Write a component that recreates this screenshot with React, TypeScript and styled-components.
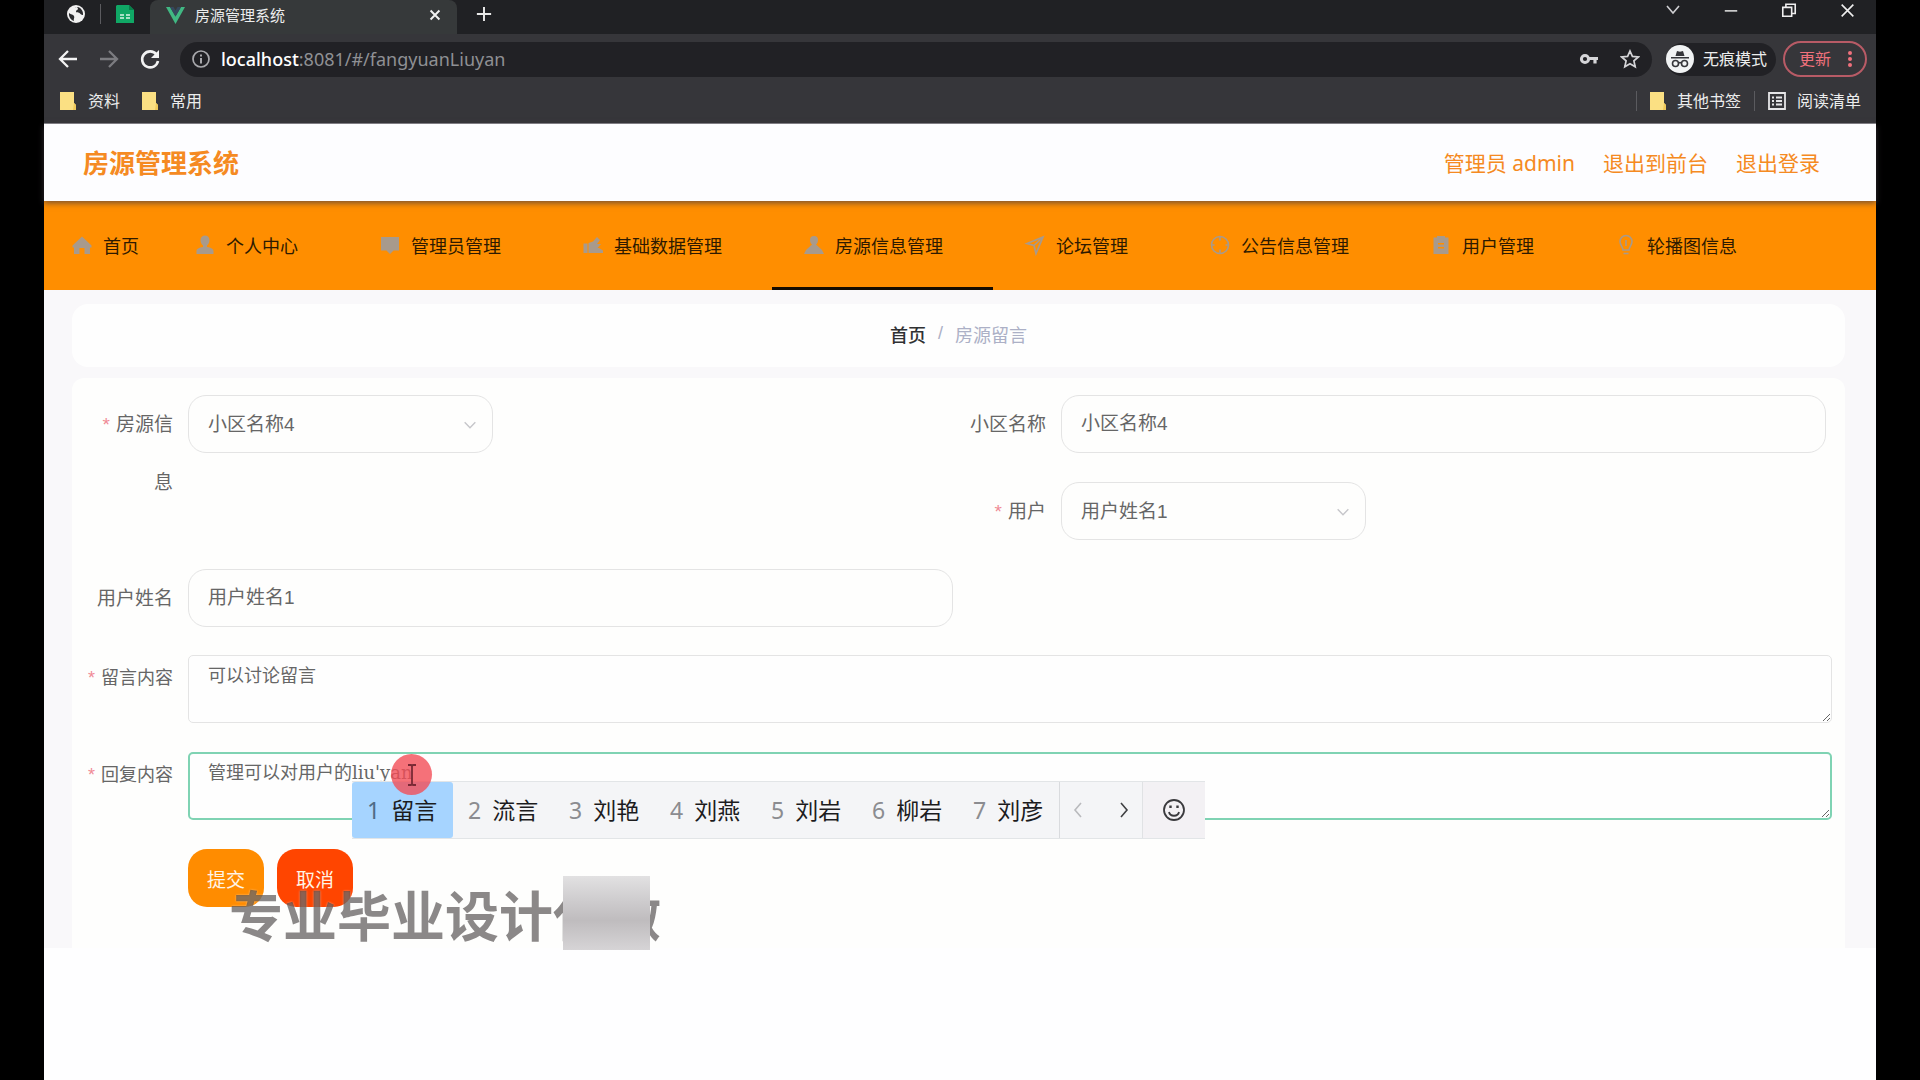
import React from "react";
import styled, { createGlobalStyle, css } from "styled-components";

const uiFont = `"Noto Sans", "Noto Sans CJK SC", sans-serif`;
const cjkFont = `"Liberation Sans", "Noto Sans CJK SC", sans-serif`;

const GlobalStyle = createGlobalStyle`
  *, *::before, *::after { box-sizing: border-box; }
  body { margin: 0; background: #000; font-family: ${cjkFont}; }
  button, input, select, textarea { font: inherit; color: inherit; margin: 0; }
  button { border: 0; background: none; padding: 0; }
  a { color: inherit; text-decoration: none; }
  svg { display: block; flex: none; }
`;

const Window = styled.div`
  margin: 0 44px;
  min-height: 100vh;
  display: flex;
  flex-direction: column;
  background: #fefeff;
`;

/* ---------- browser chrome ---------- */
const Chrome = styled.header`
  background: #36363a;
  color: #eceded;
  font-family: ${uiFont};
  font-size: 16px;
  line-height: 24px;
  border-bottom: 1px solid #8b8b90;
`;
const TabStrip = styled.div`
  display: flex;
  height: 34px;
  background: #202124;
`;
const PinnedTabs = styled.div`
  display: flex;
  align-items: center;
  width: 106px;
  gap: 15px;
  padding: 0 0 6px 23px;
`;
const Divider = styled.span<{ $color?: string }>`
  width: 1px;
  height: 20px;
  background: ${(p) => p.$color ?? "#5b5b5f"};
`;
const ActiveTab = styled.div`
  display: flex;
  align-items: center;
  gap: 10px;
  width: 307px;
  padding: 0 14px 4px 16px;
  border-radius: 8px 8px 0 0;
  background: #36393a;
`;
const TabTitle = styled.span`
  flex: 1;
  font-size: 15px;
`;
const IconButton = styled.button`
  display: grid;
  place-items: center;
`;
const NewTab = styled(IconButton)`
  width: 54px;
  height: 28px;
`;
const WindowControls = styled.div`
  display: flex;
  margin-left: auto;
  height: 20px;
`;
const ControlButton = styled(IconButton)`
  width: 58px;
`;
const Toolbar = styled.div`
  display: flex;
  align-items: center;
  height: 50px;
  padding: 0 9px 0 13px;
`;
const NavButtons = styled.div`
  display: flex;
  gap: 19px;
  width: 123px;
`;
const AddressBar = styled.div`
  flex: 1;
  display: flex;
  align-items: center;
  height: 35px;
  padding: 0 12px;
  border-radius: 18px;
  background: #212125;
  font-size: 18px;
  color: #8f9094;
`;
const Url = styled.span`
  flex: 1;
  padding-left: 11px;
`;
const Host = styled.span`
  color: #fff;
  font-weight: 500;
`;
const AddressActions = styled.div`
  display: flex;
  gap: 21px;
`;
const Incognito = styled.div`
  display: flex;
  align-items: center;
  gap: 9px;
  height: 33px;
  margin: 0 7px 0 14px;
  padding: 0 9px 0 0;
  border-radius: 17px;
  background: #212125;
`;
const UpdateButton = styled.button`
  display: flex;
  align-items: center;
  gap: 16px;
  height: 36px;
  padding: 0 12px 0 14px;
  border: 2px solid #b85b66;
  border-radius: 18px;
  color: #f0717c;
`;
const Bookmarks = styled.nav`
  display: flex;
  align-items: center;
  height: 39px;
  padding: 0 15px 6px 16px;
`;
const Bookmark = styled.a`
  display: flex;
  align-items: center;
  gap: 12px;
  margin-right: 22px;
`;
const BookmarksRight = styled.div`
  display: flex;
  align-items: center;
  gap: 13px;
  margin-left: auto;
  ${Bookmark} { margin-right: 0; gap: 11px; }
`;

/* ---------- site ---------- */
const SiteHeader = styled.div`
  position: relative;
  display: flex;
  align-items: center;
  justify-content: space-between;
  height: 77px;
  padding: 0 56px 0 39px;
  background: #fdfdff;
  color: #f58a22;
  box-shadow: 0 2px 6px rgba(70, 60, 70, 0.75);
`;
const SiteTitle = styled.h1`
  margin: 0;
  padding-top: 2px;
  font-size: 26px;
  line-height: 38px;
  font-weight: 700;
`;
const UserLinks = styled.div`
  display: flex;
  gap: 28px;
  font-family: ${uiFont};
  font-size: 21px;
  line-height: 32px;
`;
const MainMenu = styled.nav`
  display: flex;
  height: 89px;
  background: #ff8e00;
  color: #2e1a00;
  font-size: 18px;
`;
const MenuItem = styled.a<{ $active?: boolean; $plain?: boolean }>`
  display: flex;
  align-items: center;
  gap: 9px;
  padding: ${(p) => (p.$plain ? "2px 24px 0 26px" : "2px 50px 0 30px")};
  border-bottom: 3px solid ${(p) => (p.$active ? "#160c00" : "transparent")};
  white-space: nowrap;
`;
const Main = styled.main`
  padding: 14px 31px 0 28px;
  background: #f9f8fa;
`;
const Breadcrumb = styled.nav`
  display: flex;
  align-items: center;
  justify-content: center;
  gap: 12px;
  height: 63px;
  margin-bottom: 11px;
  padding-bottom: 4px;
  border-radius: 16px;
  background: #fefefe;
  font-size: 18px;
  color: #acb0c6;
`;
const CrumbLink = styled.a`
  color: #303133;
  font-weight: 500;
`;
const Form = styled.form`
  padding: 17px 13px 41px 8px;
  border-radius: 12px 12px 0 0;
  background: #fefefd;
  color: #666;
`;
const FieldGrid = styled.div`
  display: grid;
  grid-template-columns: 1fr 1fr;
  grid-auto-rows: 58px;
  row-gap: 29px;
  margin-bottom: 28px;
  padding-right: 6px;
  font-size: 19px;
  line-height: 58px;
`;
const Field = styled.div<{ $column?: number; $tall?: boolean }>`
  display: flex;
  align-items: flex-start;
  ${(p) => p.$column && css`grid-column: ${p.$column};`}
  ${(p) => p.$tall && css`grid-row: span 2;`}
`;
const Label = styled.label<{ $required?: boolean }>`
  flex: none;
  width: 108px;
  padding: 1px 15px 0 12px;
  text-align: right;
  ${(p) => p.$required && css`
    &::before {
      content: "*";
      margin-right: 6px;
      color: #f08a96;
    }
  `}
`;
const TextInput = styled.input`
  flex: 1;
  min-width: 0;
  height: 58px;
  padding: 0 19px;
  border: 1px solid #e4e4e4;
  border-radius: 18px;
  background: #fefefd;
  outline: 0;
`;
const SelectBox = styled.div`
  position: relative;
  width: 305px;
  svg { position: absolute; right: 15px; top: 22px; pointer-events: none; }
`;
const Select = styled.select`
  display: block;
  appearance: none;
  width: 100%;
  height: 58px;
  padding: 0 19px;
  border: 1px solid #e4e4e4;
  border-radius: 18px;
  background: #fefefd;
  outline: 0;
`;
const AreaField = styled.div`
  position: relative;
  display: flex;
  margin-bottom: 29px;
  font-size: 18px;
  line-height: 46px;
  ${Label} { padding: 0 15px 0 0; }
`;
const TextArea = styled.textarea<{ $focused?: boolean }>`
  flex: 1;
  min-width: 0;
  height: 68px;
  padding: ${(p) => (p.$focused ? "5px 18px" : "6px 19px")};
  border: ${(p) => (p.$focused ? "2px solid #7fd3b3" : "1px solid #e4e4e4")};
  border-radius: 5px;
  background: #fefefe;
  font-family: "DejaVu Serif", "Noto Sans CJK SC", serif;
  line-height: 27px;
  outline: 0;
  resize: vertical;
`;
const Pointer = styled.div`
  position: absolute;
  left: 311px;
  top: 2px;
  z-index: 3;
  display: grid;
  place-items: center;
  width: 41px;
  height: 41px;
  border-radius: 50%;
  background: rgba(242, 78, 88, 0.8);
`;
const Candidates = styled.div`
  position: absolute;
  left: 272px;
  top: 29px;
  z-index: 2;
  display: flex;
  height: 58px;
  border: solid #e2e5e7;
  border-width: 1px 0;
  background: #f4f5f7;
  font-family: ${uiFont};
  font-size: 23px;
  line-height: 32px;
  color: #1c1c1e;
`;
const Candidate = styled.button<{ $selected?: boolean }>`
  display: flex;
  align-items: center;
  gap: 11px;
  width: 101px;
  padding-left: 15px;
  white-space: nowrap;
  ${(p) => p.$selected && css`
    background: #a6d4ff;
    border-radius: 3px;
  `}
`;
const CandidateKey = styled.span<{ $selected?: boolean }>`
  color: ${(p) => (p.$selected ? "#4f6b86" : "#8b8c90")};
`;
const Pager = styled.div`
  display: flex;
  justify-content: center;
  gap: 28px;
  width: 84px;
  border-left: 1px solid #d9dbde;
  border-right: 1px solid #e0e2e4;
`;
const EmojiButton = styled(IconButton)`
  width: 62px;
  background: #f3f1f4;
`;
const Actions = styled.div`
  position: relative;
  display: flex;
  gap: 13px;
  padding-left: 108px;
`;
const ActionButton = styled.button<{ $color: string }>`
  width: 76px;
  height: 58px;
  border-radius: 19px;
  background: ${(p) => p.$color};
  color: #fff4e6;
  font-size: 19px;
`;
const Watermark = styled.div`
  position: absolute;
  left: 149px;
  top: 42px;
  font-size: 54px;
  line-height: 54px;
  font-weight: 700;
  white-space: nowrap;
  color: rgba(55, 50, 50, 0.58);
  text-shadow: 0 0 2px rgba(255, 255, 255, 0.5);
`;
const Mosaic = styled.div`
  position: absolute;
  left: 483px;
  top: 27px;
  width: 87px;
  height: 74px;
  background: linear-gradient(180deg, #e2e1e2 0%, #cdcbcd 35%, #bfbcbe 60%, #d6d4d6 100%);
`;

/* ---------- icons ---------- */
const Folder = () => (
  <svg width="16" height="18" viewBox="0 0 16 18">
    <path d="M0 0h14v11l2 2v5H0z" fill="#fbe083" />
    <path d="M14 11l2 2v5h-3z" fill="#f0c95a" />
  </svg>
);
const Chevron = ({ d, color, size = 18, w = 1.6 }: { d: string; color: string; size?: number; w?: number }) => (
  <svg width={size} height={size} viewBox="0 0 18 18" fill="none" stroke={color} strokeWidth={w}>
    <path d={d} />
  </svg>
);
const DownChevron = () => <Chevron d="M3 6l6 6 6-6" color="#c6c6ca" size={16} />;

const menuIcons: Record<string, React.ReactNode> = {
  home: <path d="M12 3.5L2.500 12.500v2H4V21h5.500v-6h5v6H20v-6.500h1.500v-2z" />,
  user: <path d="M12 2.500a4.500 4.500 0 0 1 4.500 4.500c0 2.500-1 4.500-2.500 5.500v1.500c4 .5 6.500 2 6.500 4v3h-17v-3c0-2 2.500-3.500 6.500-4v-1.500C8.500 11.500 7.500 9.500 7.500 7A4.500 4.500 0 0 1 12 2.500z" />,
  comment: <path d="M3 4h18v13.500h-5.500L12 21l-3.500-3.500H3z" />,
  thumb: <path d="M2.500 10.500h4V20h-4zM7.500 10l4.500-1.500L16 4l3 3-3 4h4l-3.500 4h1.500l4 2.500V20h-14.500z" />,
  custom: <path d="M12 3a4 4 0 0 1 4 4c0 2-.8 3.800-2 4.500L20 17l2 4H2l2-4 6-5.500C8.800 10.800 8 9 8 7a4 4 0 0 1 4-4z" />,
  position: <path d="M20 4L4 10.500l7 2 2 8zM11.500 12L20 4" fill="none" stroke="currentColor" strokeWidth="1.700" />,
  circle: (
    <g fill="none" stroke="currentColor" strokeWidth="1.600">
      <circle cx="12" cy="12" r="8.500" />
      <path d="M12 3.500v4M12 16.500v4M3.500 12h3M17.500 12h3" />
    </g>
  ),
  clipboard: <path fillRule="evenodd" d="M4.500 4.500H8V3h8v1.500h3.500V21h-15zM9 10v1.500h6V10zm0 4v1.500h6V14z" />,
  mic: (
    <g fill="none" stroke="currentColor" strokeWidth="1.600">
      <path d="M9 17c0-3-3-5-3-8.500a6 6 0 0 1 12 0C18 12 15 14 15 17zM9.500 20.500h5M12 7v6" />
    </g>
  ),
};
const MenuIcon = ({ name }: { name: string }) => (
  <svg width="24" height="24" viewBox="0 0 24 24" fill="currentColor" color="#a89a8c" aria-hidden="true">
    {menuIcons[name]}
  </svg>
);

const menu = [
  { icon: "home", text: "首页", plain: true },
  { icon: "user", text: "个人中心" },
  { icon: "comment", text: "管理员管理" },
  { icon: "thumb", text: "基础数据管理" },
  { icon: "custom", text: "房源信息管理", active: true },
  { icon: "position", text: "论坛管理" },
  { icon: "circle", text: "公告信息管理" },
  { icon: "clipboard", text: "用户管理" },
  { icon: "mic", text: "轮播图信息" },
];
const candidates = ["留言", "流言", "刘艳", "刘燕", "刘岩", "柳岩", "刘彦"];

const BrowserChrome = () => (
  <Chrome>
    <TabStrip>
      <PinnedTabs>
        <svg width="18" height="18" viewBox="0 0 18 18">
          <circle cx="9" cy="9" r="9" fill="#f1f1f1" />
          <path d="M2 8c2 2 4 1 5 3s-1 3 0 5c-3-1-5.500-4-5-8zM8 3c2-1 3 0 3 1s-2 1-2 2.500 3 .5 4 2 2.500 1.500 3 1.500c.5-4-2-7-5-8z" fill="#2a2b2e" />
        </svg>
        <Divider />
        <svg width="18" height="18" viewBox="0 0 18 18">
          <path d="M1 0h12l5 5v13H0V1z" fill="#10a765" />
          <path d="M13 0l5 5h-5z" fill="#07804a" />
          <path d="M4 10h4M10 10h4M4 13h4M10 13h4" stroke="#d9f5e6" strokeWidth="1.300" />
        </svg>
      </PinnedTabs>
      <ActiveTab>
        <svg width="19" height="17" viewBox="0 0 19 17">
          <path d="M0 0h4l5.500 9.500L15 0h4L9.500 17z" fill="#41b883" />
          <path d="M4 0h3.500l2 3.500 2-3.500H15L9.500 9.500z" fill="#35495e" />
        </svg>
        <TabTitle>房源管理系统</TabTitle>
        <IconButton aria-label="关闭标签页">
          <Chevron d="M4 4l10 10M14 4L4 14" color="#f1f1f1" size={16} w={2.2} />
        </IconButton>
      </ActiveTab>
      <NewTab aria-label="新标签页">
        <Chevron d="M9 1v16M1 9h16" color="#e8e8e8" size={16} w={2.2} />
      </NewTab>
      <WindowControls>
        <ControlButton aria-label="搜索标签页"><Chevron d="M3 5l6 7 6-7" color="#cfcfd2" /></ControlButton>
        <ControlButton aria-label="最小化"><Chevron d="M2 10h14" color="#efefef" size={16} /></ControlButton>
        <ControlButton aria-label="还原"><Chevron d="M2 6h10v10H2zM5.500 6V2.500H16V13h-4" color="#efefef" size={16} w={1.800} /></ControlButton>
        <ControlButton aria-label="关闭"><Chevron d="M2 2l14 14M16 2L2 16" color="#efefef" size={15} w={1.900} /></ControlButton>
      </WindowControls>
    </TabStrip>
    <Toolbar>
      <NavButtons>
        <IconButton aria-label="后退">
          <svg width="22" height="22" viewBox="0 0 22 22" fill="none" stroke="#f3f3f3" strokeWidth="2.300"><path d="M20 11H3M11 3l-8 8 8 8" /></svg>
        </IconButton>
        <IconButton aria-label="前进">
          <svg width="22" height="22" viewBox="0 0 22 22" fill="none" stroke="#7c7c80" strokeWidth="2.300"><path d="M2 11h17M11 3l8 8-8 8" /></svg>
        </IconButton>
        <IconButton aria-label="刷新">
          <svg width="22" height="22" viewBox="0 0 22 22"><path d="M17.500 6.500A8 8 0 1 0 19 13" fill="none" stroke="#f3f3f3" strokeWidth="2.600" /><path d="M20 2v8h-8z" fill="#f3f3f3" /></svg>
        </IconButton>
      </NavButtons>
      <AddressBar>
        <svg width="18" height="18" viewBox="0 0 18 18" fill="none" stroke="#a9a9ad" strokeWidth="1.700"><circle cx="9" cy="9" r="8" /><path d="M9 8v5.500M9 4.500v2" strokeWidth="2" /></svg>
        <Url><Host>localhost</Host>:8081/#/fangyuanLiuyan</Url>
        <AddressActions>
          <IconButton aria-label="密码">
            <svg width="20" height="20" viewBox="0 0 20 20" fill="none" stroke="#d5d5d8"><circle cx="6" cy="10" r="3.600" strokeWidth="3" /><path d="M9.500 9.500H19M16 10v4.500" strokeWidth="3.200" /></svg>
          </IconButton>
          <IconButton aria-label="收藏">
            <svg width="20" height="20" viewBox="0 0 20 20" fill="none" stroke="#d5d5d8" strokeWidth="1.700"><path d="M10 2l2.400 5.400 5.900.6-4.400 3.900 1.300 5.800L10 14.700l-5.200 3 1.300-5.800L1.700 8l5.900-.6z" /></svg>
          </IconButton>
        </AddressActions>
      </AddressBar>
      <Incognito>
        <svg width="28" height="28" viewBox="0 0 28 28">
          <circle cx="14" cy="14" r="14" fill="#f1f3f4" />
          <path d="M9.500 11l1.500-5 3 .8L17 6l1.500 5zM5 12h18v1.500H5z" fill="#35363a" />
          <g fill="none" stroke="#35363a" strokeWidth="1.600"><circle cx="9.500" cy="18.500" r="3" /><circle cx="18.500" cy="18.500" r="3" /><path d="M12.500 18c1-.7 2-.7 3 0" /></g>
        </svg>
        <span>无痕模式</span>
      </Incognito>
      <UpdateButton>
        <span>更新</span>
        <svg width="6" height="18" viewBox="0 0 6 18" fill="#f0717c"><circle cx="3" cy="3" r="2" /><circle cx="3" cy="9" r="2" /><circle cx="3" cy="15" r="2" /></svg>
      </UpdateButton>
    </Toolbar>
    <Bookmarks>
      <Bookmark href="#"><Folder />资料</Bookmark>
      <Bookmark href="#"><Folder />常用</Bookmark>
      <BookmarksRight>
        <Divider />
        <Bookmark href="#"><Folder />其他书签</Bookmark>
        <Divider />
        <Bookmark href="#">
          <svg width="18" height="18" viewBox="0 0 18 18" fill="none" stroke="#e6e6e8" strokeWidth="1.800"><path d="M1 1h16v16H1zM4 5.500h2M8 5.500h6M4 9h2M8 9h6M4 12.500h2M8 12.500h6" /></svg>
          阅读清单
        </Bookmark>
      </BookmarksRight>
    </Bookmarks>
  </Chrome>
);

export default function App() {
  return (
    <>
      <GlobalStyle />
      <Window>
        <BrowserChrome />
        <SiteHeader>
          <SiteTitle>房源管理系统</SiteTitle>
          <UserLinks>
            <span>管理员 admin</span>
            <a href="#front">退出到前台</a>
            <a href="#logout">退出登录</a>
          </UserLinks>
        </SiteHeader>
        <MainMenu>
          {menu.map((m) => (
            <MenuItem key={m.text} href="#" $active={m.active} $plain={m.plain}>
              <MenuIcon name={m.icon} />
              {m.text}
            </MenuItem>
          ))}
        </MainMenu>
        <Main>
          <Breadcrumb>
            <CrumbLink href="#">首页</CrumbLink>
            <span>/</span>
            <span>房源留言</span>
          </Breadcrumb>
          <Form onSubmit={(e) => e.preventDefault()}>
            <FieldGrid>
              <Field $tall>
                <Label $required htmlFor="house">房源信息</Label>
                <SelectBox>
                  <Select id="house"><option>小区名称4</option></Select>
                  <DownChevron />
                </SelectBox>
              </Field>
              <Field>
                <Label htmlFor="community">小区名称</Label>
                <TextInput id="community" defaultValue="小区名称4" />
              </Field>
              <Field $column={2}>
                <Label $required htmlFor="user">用户</Label>
                <SelectBox>
                  <Select id="user"><option>用户姓名1</option></Select>
                  <DownChevron />
                </SelectBox>
              </Field>
              <Field $column={1}>
                <Label htmlFor="username">用户姓名</Label>
                <TextInput id="username" defaultValue="用户姓名1" />
              </Field>
            </FieldGrid>
            <AreaField>
              <Label $required htmlFor="message">留言内容</Label>
              <TextArea id="message" defaultValue="可以讨论留言" />
            </AreaField>
            <AreaField>
              <Label $required htmlFor="reply">回复内容</Label>
              <TextArea id="reply" $focused defaultValue="管理可以对用户的liu'yan" />
              <Candidates>
                {candidates.map((word, i) => (
                  <Candidate type="button" key={word} $selected={i === 0}>
                    <CandidateKey $selected={i === 0}>{i + 1}</CandidateKey>
                    {word}
                  </Candidate>
                ))}
                <Pager>
                  <IconButton type="button" aria-label="上一页"><Chevron d="M12 2L6 9l6 7" color="#b9babd" /></IconButton>
                  <IconButton type="button" aria-label="下一页"><Chevron d="M6 2l6 7-6 7" color="#3f4043" /></IconButton>
                </Pager>
                <EmojiButton type="button" aria-label="表情">
                  <svg width="24" height="24" viewBox="0 0 24 24" fill="none" stroke="#3a3a3d" strokeWidth="1.800"><circle cx="12" cy="12" r="10" /><path d="M7 14c1 5 9 5 10 0" /><path d="M8.500 7.500v2.500M15.500 7.500v2.500" strokeWidth="2.400" /></svg>
                </EmojiButton>
              </Candidates>
              <Pointer>
                <svg width="12" height="24" viewBox="0 0 12 24" fill="none" stroke="#7a2a35" strokeWidth="1.800"><path d="M2 2h3l1 1 1-1h3M2 22h3l1-1 1 1h3M6 3v18" /></svg>
              </Pointer>
            </AreaField>
            <Actions>
              <ActionButton type="submit" $color="#ff8c00">提交</ActionButton>
              <ActionButton type="button" $color="#ff4500">取消</ActionButton>
              <Watermark>专业毕业设计代做</Watermark>
              <Mosaic />
            </Actions>
          </Form>
        </Main>
      </Window>
    </>
  );
}
